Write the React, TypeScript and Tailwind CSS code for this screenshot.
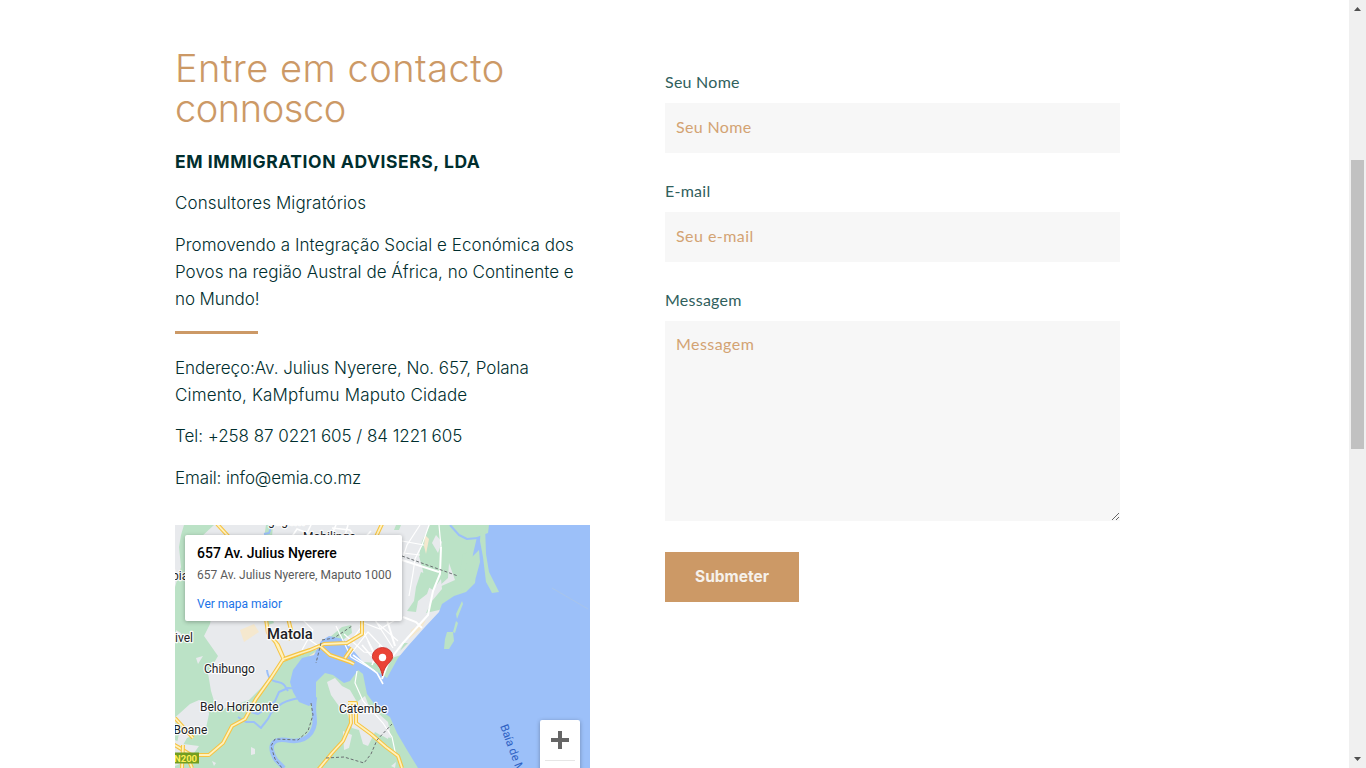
import React from "react";

const land = "#bbe2c6";
const urban = "#e8eaed";
const water = "#9cc0f9";

function MapLabel({ x, y, size, weight = 400, children }: { x: number; y: number; size: number; weight?: number; children: string }) {
  return (
    <text x={x} y={y} fontSize={size} fontWeight={weight} fill="#202124" stroke="#fff" strokeWidth="2.4" strokeLinejoin="round" paintOrder="stroke" strokeOpacity="0.9">
      {children}
    </text>
  );
}

function Highway({ d }: { d: string }) {
  return (
    <g fill="none" strokeLinejoin="round">
      <path d={d} stroke="#f6c444" strokeWidth="4" />
      <path d={d} stroke="#fff1bd" strokeWidth="1.8" />
    </g>
  );
}

function MapDrawing() {
  return (
    <svg className="block h-[243px] w-[415px]" viewBox="175 525 415 243" fontFamily="Roboto, sans-serif">
      <rect x="175" y="525" width="415" height="243" fill={land} />
      <g fill={urban}>
        <path d="M175 525h9l-3 10-2 12 2 20-6 20zM214 525h236l-4 90-20 32-50 16-24-2-23-11-22 0-20 6-18 22-8 10-12 12-32 11-6-20-3-18 10-17-14-20 6-12 4-25-12-10-8-20-6-20z" />
        <path d="M190 704l9-4 8 2 2 12-3 14-9 6-10 4-4 7-6-2 4-18-10-4zM175 740l8 4 16 2-10 14-14 6z" />
        <path d="M327 682l8-4 7 8 8 4 7 12 8-6 7 18 4 16-8 16-5-2-4-14-7-2-5-15-6-4-10-14z" />
        <path d="M366 708l12 5 10 9 3 16-9-2-14-8zM382 723l8 5-2 11-7-4zM391 766l5-4-1 6zM251 747l4 2v5l-4 1zM343 731l9 4-3 13-5 2zM212 761l4 2-2 3z" />
        <path d="M203 656l-7 2 2 6zM176 630l5 3-2 7-4-3z" />
      </g>
      <g fill={land}>
        <path d="M430 525h47l-1 25-13 4-4 23 3 16-7 10-16 7-13 3 6-12 10-12-1-10-8 11-8-5-2-14-4-15 3-15 8-16zM421 572l12 5-6 17-9 7-2 11-9-1 7-10 2-14zM396 525h5l-2 5h-5z" />
        <path d="M322 640l8-3 12-10 9-2 1 8-8 6-10 4-10-1zM266 525h7l-1 12-10 13zM264 618l8 0 2 5-6 2zM404 643h4l-8 8z" />
      </g>
      <path d="M436 535l6 7-4 11-6-10zM449 563l6 17-18 8 11-10z" fill={urban} />
      <path d="M240 630l14-6 5 8-15 10zM309 656l8-5 2 10-8 4zM411 630l15-10-5 9-12 10zM425 535l4 4-3 15-2-8z" fill="#f5e8ce" />

      <path fill={water} d="M476 525h114v243H418l-11-18-10-17-7-16-12-8-11-15-4-20-5-4-8 11-6 2-11-8-8-2-9 9v18l-7 6-10-4-6-10-3-10 3-12 9-12 12-3 7-14 8-5 14 3 9 10 11 13 13 9 11 7 11-20 10-12 17-19 14-15 3-8 12-8 12-4 9-9 1-8-4-12 1-9 4-17 11-4 2-16z" />
      <g fill="none" stroke={water} strokeLinejoin="round">
        <path d="M315 697c-4 18 4 24-4 36-6 8-16 9-25 7-15-2-18 7-10 20l8 8" strokeWidth="4.5" />
        <path d="M301 689l-13-1-9 4-4 9-8 7-9 6-7-2M301 698c-18 2-23 8-30 15-3 8-7 10-10 15l-7-6h-8l-8-5M267 670c1 8 4 11 11 12s7 5 10 9" strokeWidth="2" />
        <path d="M450 525l9 10 8 4 11-1M272 525l-3 8-5 1" strokeWidth="2" />
      </g>
      <g fill={land}>
        <path d="M481 525h4l1 29 3 18 10 20-7 1-2-4-4-7-3-25-3-16zM479 550l1 12-4 15-6 5-5-11 2-9z" />
        <path d="M462 601l1 3-6 15-1-5zM456 621l2 2-3 10-2-1zM453 632l1 9-5 8h-5l1-10 2-7z" />
      </g>
      <path d="M552 588l36 21" stroke="#aec6e2" strokeWidth=".7" />

      <g fill="none" stroke="#fff">
        <path d="M429 525l-7 20-7 14-2 14-4 23M420 525l-13 20-4 12M402 541l22 4M403 553l17 2M439 525l2 22M390 600l-14 22 22 19M375 620l18 28M360 625l14 27 18 7M344 634l20 18 24 3M348 646l16-23 16 6 17-10M350 655l18-23 22 23M336 626l15 31 24 14M357 671l-2 12 8 18 20 22 9 14 4 19M321 648l-18-13-24-1M302 650l11-20-10-10" strokeWidth="1.2" />
        <path d="M402 560l37 12M441 547l-1 27-7 17-5 24-25 28-14 18-7 18M403 617l13 5 6 6M387 620l8 26" strokeWidth="2" />
        <path d="M353 655l24 18 6 11M362 645l18 21M368 641l13 28M380 645l-8 20M289 541l8-12 13 5-8 13M311 525l-10 20M332 528l18 2 10 15M336 525l-8 18M371 531l-11 12M348 525l-6 20" strokeWidth="1.6" />
      </g>
      <Highway d="M217 524l24 26M382 524l-17 36M266 619l2 14 10 12 6 14M276 643l8 17 20-8M284 658l-13 20-15 21-11 20-13 7-9 17-14 12h-18l-13-8-7-4-6 8h-4" />
      <Highway d="M175 718l18 20M183 745l-1 23M188 758l4 10" />
      <Highway d="M362 618v16l-15 9-23 1-14 6-12 4-14 5M320 646l10 9 20 7 4 2M352 648l-7 10M288 618l3 12-3 10" />
      <Highway d="M348 703h8v20l15 11 15 13 12 9 4 12M350 703l1 20-8 18-11 12-14 17" />
      <g fill="none" stroke="#6a6f72" strokeWidth="1" strokeDasharray="3 2">
        <path d="M402 556l56 20M322 640l12-2 18-12M321 643l-5 20M311 703l2 12-5 16-10 9-23-1-4 7 4 13 7 9M326 758l18-1 20 6 7-9 6-14 15-16" />
      </g>

      <MapLabel x={268} y={525} size={12}>gagem</MapLabel>
      <MapLabel x={303} y={540.5} size={12}>Mobilinga</MapLabel>
      <MapLabel x={172} y={580} size={12}>bia</MapLabel>
      <MapLabel x={175} y={642} size={12}>ivel</MapLabel>
      <MapLabel x={267} y={639} size={14.8} weight={500}>Matola</MapLabel>
      <MapLabel x={204} y={672.5} size={12}>Chibungo</MapLabel>
      <MapLabel x={200} y={710.5} size={12}>Belo Horizonte</MapLabel>
      <MapLabel x={339} y={712.5} size={12}>Catembe</MapLabel>
      <MapLabel x={173.500} y={733.5} size={12}>Boane</MapLabel>
      <rect x="173" y="752.5" width="26" height="11" fill="#729e20" />
      <text x="174" y="761.5" fontSize="9.5" fontWeight="700" fill="#ffee55">N200</text>
      <text x="0" y="0" transform="translate(500 726) rotate(70)" fontSize="11.5" fontWeight="400" fill="#2f62c4">Baía de Maputo</text>
      <path d="M382.500 676c-1.500-7-3-9-6-12.500-3-3.300-4.200-5-4.200-7a10.200 9 0 0 1 20.400 0c0 2-1.200 3.700-4.200 7-3 3.500-4.500 5.500-6 12.500z" fill="#ea4335" stroke="#c5221f" strokeWidth=".8" />
      <circle cx="382.500" cy="657.500" r="3.700" fill="#fff" />
    </svg>
  );
}

function MapPanel() {
  return (
    <div className="relative mt-[33px] h-[243px] w-[415px] overflow-hidden font-['Roboto',sans-serif] font-normal">
      <MapDrawing />
      <div className="absolute left-[10px] top-[10px] h-[86px] w-[217px] rounded-[2px] bg-white pl-3 shadow-[0_1px_4px_rgba(0,0,0,0.3)]">
        <div className="pt-[9px] text-[14px] font-medium leading-[18px] text-black">657 Av. Julius Nyerere</div>
        <div className="mt-[5px] whitespace-nowrap text-[12px] leading-4 text-[#5b5b5b]">657 Av. Julius Nyerere, Maputo 1000</div>
        <div className="mt-[13px] text-[12px] leading-4 text-[#1a73e8]">Ver mapa maior</div>
      </div>
      <div className="absolute left-[365px] top-[195px] h-[81px] w-[40px] rounded-[2px] bg-white shadow-[0_1px_4px_rgba(0,0,0,0.3)]">
        <svg className="block h-[40px] w-[40px]" viewBox="0 0 40 40"><path d="M11 20h18M20 11v18" stroke="#666" strokeWidth="4" /></svg>
        <div className="mx-[5px] h-px bg-[#e6e6e6]" />
      </div>
    </div>
  );
}

function Field({ label, children }: { label: string; children: React.ReactNode }) {
  return (
    <label className="block">
      <span className="block h-[31px] text-[16px] leading-5 tracking-[0.25px] text-[#30605c]">{label}</span>
      {children}
    </label>
  );
}

function Scrollbar() {
  return (
    <div className="flex h-full w-[17px] flex-col items-center bg-[#f0f0f0]">
      <svg className="h-[17px] w-[17px]" viewBox="0 0 17 17"><path d="M5 11h7L8.500 7z" fill="#505050" /></svg>
      <div className="mt-[143px] h-[289px] w-[13px] bg-[#c1c1c1]" />
      <svg className="mt-auto h-[17px] w-[17px]" viewBox="0 0 17 17"><path d="M5 6h7L8.500 10z" fill="#505050" /></svg>
    </div>
  );
}

export default function App() {
  return (
    <div className="flex h-[768px] w-full overflow-hidden bg-white">
      <main className="flex flex-1 pl-[175px]">
        <section className="w-[415px] pt-[48px] font-['Inter',sans-serif] text-[17px] font-light leading-[27px] text-[#002e2e]">
          <h1 className="whitespace-nowrap text-[38px] font-light leading-10 text-[#cc9966]">
            <span className="block tracking-[0.5px]">Entre em contacto</span>
            <span className="block tracking-[-0.45px]">connosco</span>
          </h1>
          <p className="mt-[20px] whitespace-nowrap text-[17.500px] font-bold tracking-[0.570px]">EM IMMIGRATION ADVISERS, LDA</p>
          <p className="mt-[15px] tracking-[0.100px]">Consultores Migratórios</p>
          <p className="mt-[15px] whitespace-nowrap">
            <span className="block tracking-[0.050px]">Promovendo a Integração Social e Económica dos</span>
            <span className="block tracking-[0.025px]">Povos na região Austral de África, no Continente e</span>
            <span className="block tracking-[-0.100px]">no Mundo!</span>
          </p>
          <div className="mt-[18px] h-[3px] w-[83px] bg-[#cc9966]" />
          <p className="mt-[21px] whitespace-nowrap">
            <span className="block tracking-[-0.050px]">Endereço:Av. Julius Nyerere, No. 657, Polana</span>
            <span className="block tracking-[0.150px]">Cimento, KaMpfumu Maputo Cidade</span>
          </p>
          <p className="mt-[14px] tracking-[-0.040px]">Tel: +258 87 0221 605 / 84 1221 605</p>
          <p className="mt-[15px] tracking-[-0.130px]">Email: info@emia.co.mz</p>
          <MapPanel />
        </section>
        <form className="ml-[75px] w-[455px] pt-[72px] font-['Lato',sans-serif]" onSubmit={(e) => e.preventDefault()}>
          <Field label="Seu Nome">
            <input placeholder="Seu Nome" className="block h-[50px] w-full bg-[#f7f7f7] px-[11px] pb-[3px] text-[16px] tracking-[0.350px] placeholder:text-[#d3a373]" />
          </Field>
          <div className="mt-[28px]">
            <Field label="E-mail">
              <input placeholder="Seu e-mail" className="block h-[50px] w-full bg-[#f7f7f7] px-[11px] pb-[3px] text-[16px] tracking-[0.450px] placeholder:text-[#d3a373]" />
            </Field>
          </div>
          <div className="mt-[28px]">
            <Field label="Messagem">
              <textarea placeholder="Messagem" className="block h-[200px] w-full bg-[#f7f7f7] px-[11px] py-[11px] text-[16px] leading-6 tracking-[0.450px] placeholder:text-[#d3a373]" />
            </Field>
          </div>
          <button type="submit" className="mt-[31px] h-[50px] w-[134px] bg-[#cc9966] font-['Inter',sans-serif] text-[15.500px] font-bold text-[#f6f1eb]">Submeter</button>
        </form>
      </main>
      <Scrollbar />
    </div>
  );
}
